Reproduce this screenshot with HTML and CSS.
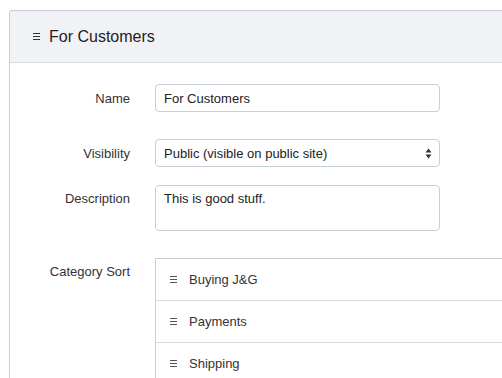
FILE: index.html
```html
<!DOCTYPE html>
<html lang="en">
<head>
  <meta charset="UTF-8" />
  <title>Edit Category Group</title>
  <link rel="stylesheet" href="styles.css">
</head>
<body>
  <div class="panel">
    <div class="panel-heading">
      <svg class="handle" width="7" height="7" viewBox="0 0 7 7"><path d="M0 0.5H7M0 3.5H7M0 6.5H7" stroke="currentColor" stroke-width="1"/></svg>
      <span class="panel-title">For Customers</span>
    </div>

    <div class="panel-body">
      <div class="form-row row-name">
        <label for="name">Name</label>
        <input type="text" id="name" value="For Customers" />
      </div>

      <div class="form-row row-visibility">
        <label for="visibility">Visibility</label>
        <div class="select-wrap">
          <select id="visibility">
            <option>Public (visible on public site)</option>
            <option>Private</option>
          </select>
          <svg class="select-arrows" width="7" height="11" viewBox="0 0 7 11"><path d="M3.5 0.5L6.5 4.5H0.5Z M3.5 10.5L6.5 6.5H0.5Z" fill="#333"/></svg>
        </div>
      </div>

      <div class="form-row row-description">
        <label for="description">Description</label>
        <textarea id="description">This is good stuff.</textarea>
      </div>

      <div class="form-row row-sort">
        <label>Category Sort</label>
        <ul class="sort-list">
          <li>
            <svg class="handle light" width="7" height="7" viewBox="0 0 7 7"><path d="M0 0.5H7M0 3.5H7M0 6.5H7" stroke="currentColor" stroke-width="1"/></svg>
            Buying J&amp;G
          </li>
          <li>
            <svg class="handle light" width="7" height="7" viewBox="0 0 7 7"><path d="M0 0.5H7M0 3.5H7M0 6.5H7" stroke="currentColor" stroke-width="1"/></svg>
            Payments
          </li>
          <li>
            <svg class="handle light" width="7" height="7" viewBox="0 0 7 7"><path d="M0 0.5H7M0 3.5H7M0 6.5H7" stroke="currentColor" stroke-width="1"/></svg>
            Shipping
          </li>
        </ul>
      </div>
    </div>
  </div>
</body>
</html>
```

FILE: styles.css
```css
html, body {
  height: 100%;
}
body {
  margin: 0;
  font-family: "Liberation Sans", Arial, sans-serif;
  font-size: 13px;
  color: #333;
  background: #fff;
  overflow: hidden;
}
.panel {
  box-sizing: border-box;
  margin: 10px 0 0 9px;
  width: calc(100% - 9px);
  height: calc(100% - 10px);
  overflow: hidden;
  border: 1px solid #c6ced8;
  border-right: 0;
  border-bottom: 0;
  border-radius: 3px 0 0 0;
}
.panel-heading {
  display: flex;
  align-items: center;
  gap: 9px;
  height: 51px;
  padding-left: 23px;
  background: #f0f2f5;
  border-bottom: 1px solid #d9dde3;
}
.handle {
  color: #2b3440;
  display: block;
}
.handle.light {
  color: #555;
}
.panel-title {
  font-size: 16px;
  color: #222;
}
.panel-body {
  padding-top: 21px;
}
.form-row {
  display: grid;
  grid-template-columns: 120px 285px;
  column-gap: 25px;
  align-items: center;
}
.form-row label {
  text-align: right;
}
.row-name { margin-bottom: 27px; }
.row-visibility { margin-bottom: 18px; }
.row-description { margin-bottom: 27px; align-items: start; }
.row-description label { padding-top: 6px; }
.row-sort { align-items: start; grid-template-columns: 120px 1fr; }
.row-sort label { padding-top: 6px; }

input[type="text"],
select,
textarea {
  box-sizing: border-box;
  width: 100%;
  font-family: inherit;
  font-size: 13px;
  color: #222;
  border: 1px solid #c6ced8;
  border-radius: 4px;
  background: #fff;
  outline: none;
  margin: 0;
}
input[type="text"] {
  height: 28px;
  padding: 0 8px;
}
.select-wrap {
  position: relative;
}
select {
  height: 28px;
  padding: 0 8px;
  appearance: none;
  -webkit-appearance: none;
}
.select-arrows {
  position: absolute;
  right: 8px;
  top: 9px;
  pointer-events: none;
}
textarea {
  display: block;
  height: 46px;
  padding: 5px 8px;
  resize: none;
  line-height: 16px;
}
.sort-list {
  list-style: none;
  margin: 0;
  padding: 0;
  border: 1px solid #c6ced8;
  border-right: 0;
}
.sort-list li {
  display: flex;
  align-items: center;
  gap: 12px;
  height: 41px;
  padding-left: 14px;
  border-bottom: 1px solid #d3d9e0;
  color: #333;
}
```
